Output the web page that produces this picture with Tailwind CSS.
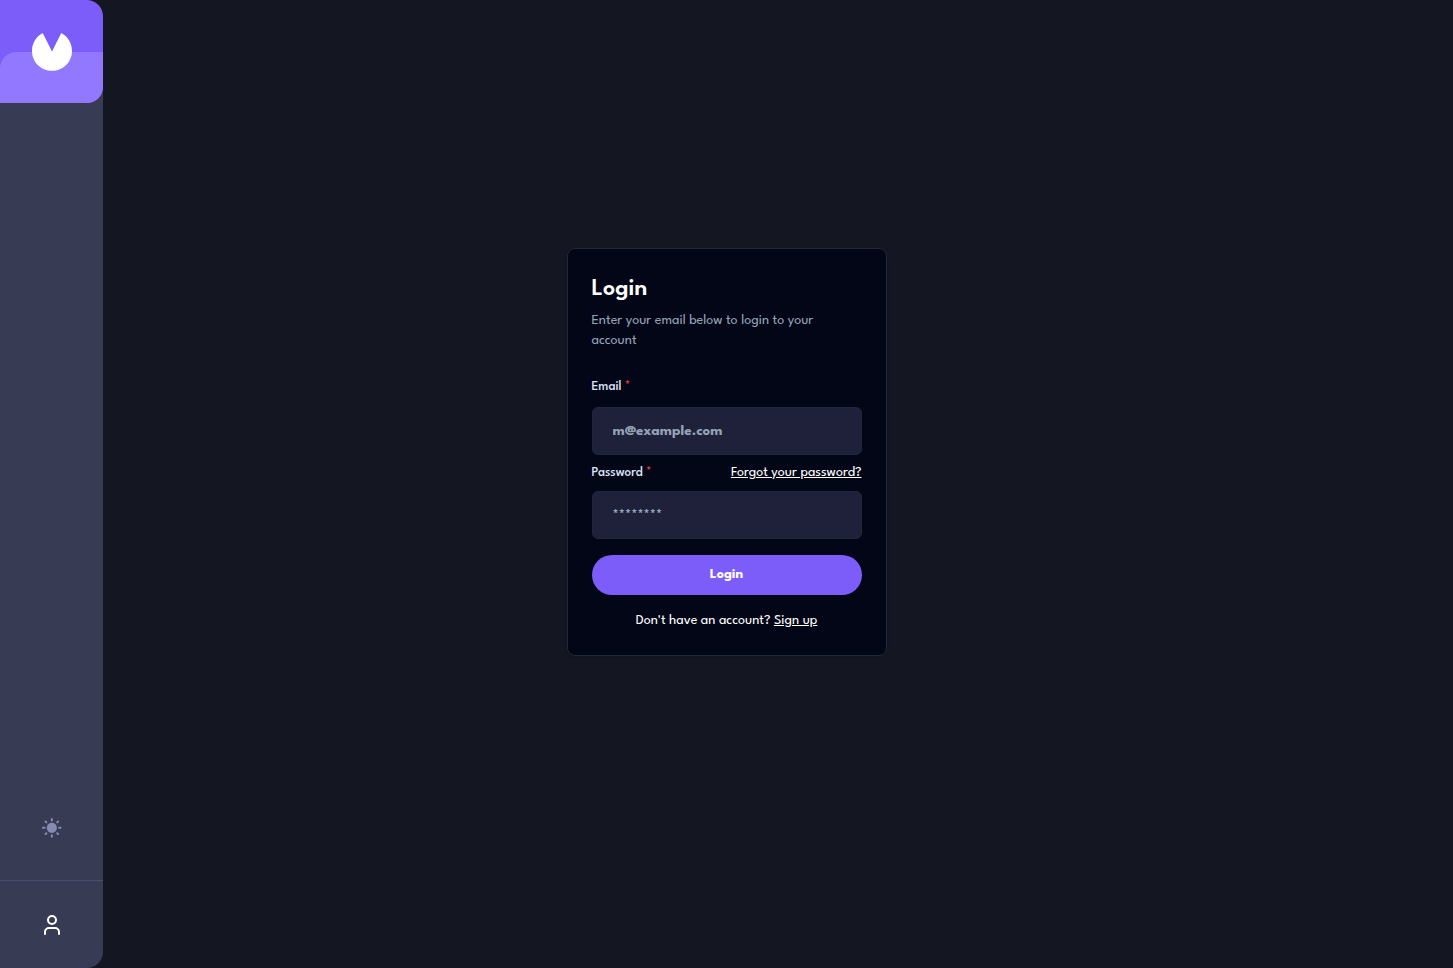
<!DOCTYPE html>
<html lang="en">
<head>
<meta charset="utf-8">
<meta name="viewport" content="width=device-width, initial-scale=1">
<title>Login</title>
<script src="https://cdn.jsdelivr.net/npm/@tailwindcss/browser@4"></script>
</head>
<body class="min-h-screen bg-[#141622] font-['League_Spartan','Lato',sans-serif] text-sm text-white">
<aside class="fixed inset-y-0 left-0 z-10 flex w-[103px] flex-col justify-between overflow-hidden rounded-r-2xl bg-[#373b54]">
  <a href="#" aria-label="Home" class="relative flex h-[103px] items-center justify-center overflow-hidden rounded-r-2xl bg-[#7c5dfa]">
    <span class="absolute inset-x-0 bottom-0 h-[51px] rounded-tl-2xl bg-[#9277ff]"></span>
    <svg class="relative" width="40" height="38" viewBox="0 0 40 38" fill="#fff" aria-hidden="true"><path d="M10.69 0 20 18.62 29.31 0C35.67 3.35 40 10.1 40 17.89 40 28.92 31.05 37.78 20 37.78S0 28.92 0 17.89C0 10.1 4.33 3.35 10.69 0Z"/></svg>
  </a>
  <div>
    <div class="flex h-[105px] items-center justify-center">
      <button type="button" aria-label="Toggle theme">
        <svg width="20" height="20" viewBox="0 0 20 20" fill="none" stroke="#858bb2" stroke-width="2" stroke-linecap="round" aria-hidden="true"><circle cx="9.8" cy="9.8" r="5.1" fill="#858bb2" stroke="none"/><path d="M9.8 1v1.6M9.8 17.2v1.5M1 9.8h1.6M17.1 9.8h1.5M3.5 3.5l.9.9M15.2 15.2l.9.9M3.5 16.1l.9-.9M15.2 4.4l.9-.9"/></svg>
      </button>
    </div>
    <div class="flex h-22 items-center justify-center border-t border-[#494e6e]">
      <button type="button" aria-label="Account">
        <svg width="24" height="24" viewBox="0 0 24 24" fill="none" stroke="#fff" stroke-width="2" stroke-linecap="round" stroke-linejoin="round" aria-hidden="true"><circle cx="12" cy="7" r="4"/><path d="M19 21v-2a4 4 0 0 0-4-4H9a4 4 0 0 0-4 4v2"/></svg>
      </button>
    </div>
  </div>
</aside>
<main class="flex min-h-screen items-center justify-center pb-16">
  <section class="w-80 rounded-lg border border-[#1e293b] bg-[#020617] p-6 shadow-sm">
    <header class="flex flex-col gap-1.5">
      <h1 class="text-2xl font-semibold">Login</h1>
      <p class="leading-5 text-[#94a3b8]">Enter your email below to login to your account</p>
    </header>
    <form class="mt-6 flex flex-col">
      <label for="email" class="text-[13px] leading-6 font-medium text-[#dfe3fa]">Email <span class="text-[#ec4040]">*</span></label>
      <input id="email" type="email" placeholder="m@example.com" class="mt-2 h-12 w-full rounded-md border border-[#1e293b] bg-[#1e2139] px-5 text-[15px] font-bold outline-none placeholder:text-[#94a3b8]">
      <div class="mt-2 flex h-5 items-center justify-between">
        <label for="password" class="text-[13px] font-medium text-[#dfe3fa]">Password <span class="text-[#ec4040]">*</span></label>
        <a href="#" class="underline">Forgot your password?</a>
      </div>
      <input id="password" type="password" placeholder="********" class="mt-2 h-12 w-full rounded-md border border-[#1e293b] bg-[#1e2139] px-5 text-[15px] font-bold outline-none placeholder:text-[#94a3b8]">
      <button type="submit" class="mt-4 h-10 rounded-full bg-[#7c5dfa] font-bold">Login</button>
      <p class="mt-4 text-center leading-5">Don't have an account? <a href="#" class="underline">Sign up</a></p>
    </form>
  </section>
</main>
</body>
</html>
